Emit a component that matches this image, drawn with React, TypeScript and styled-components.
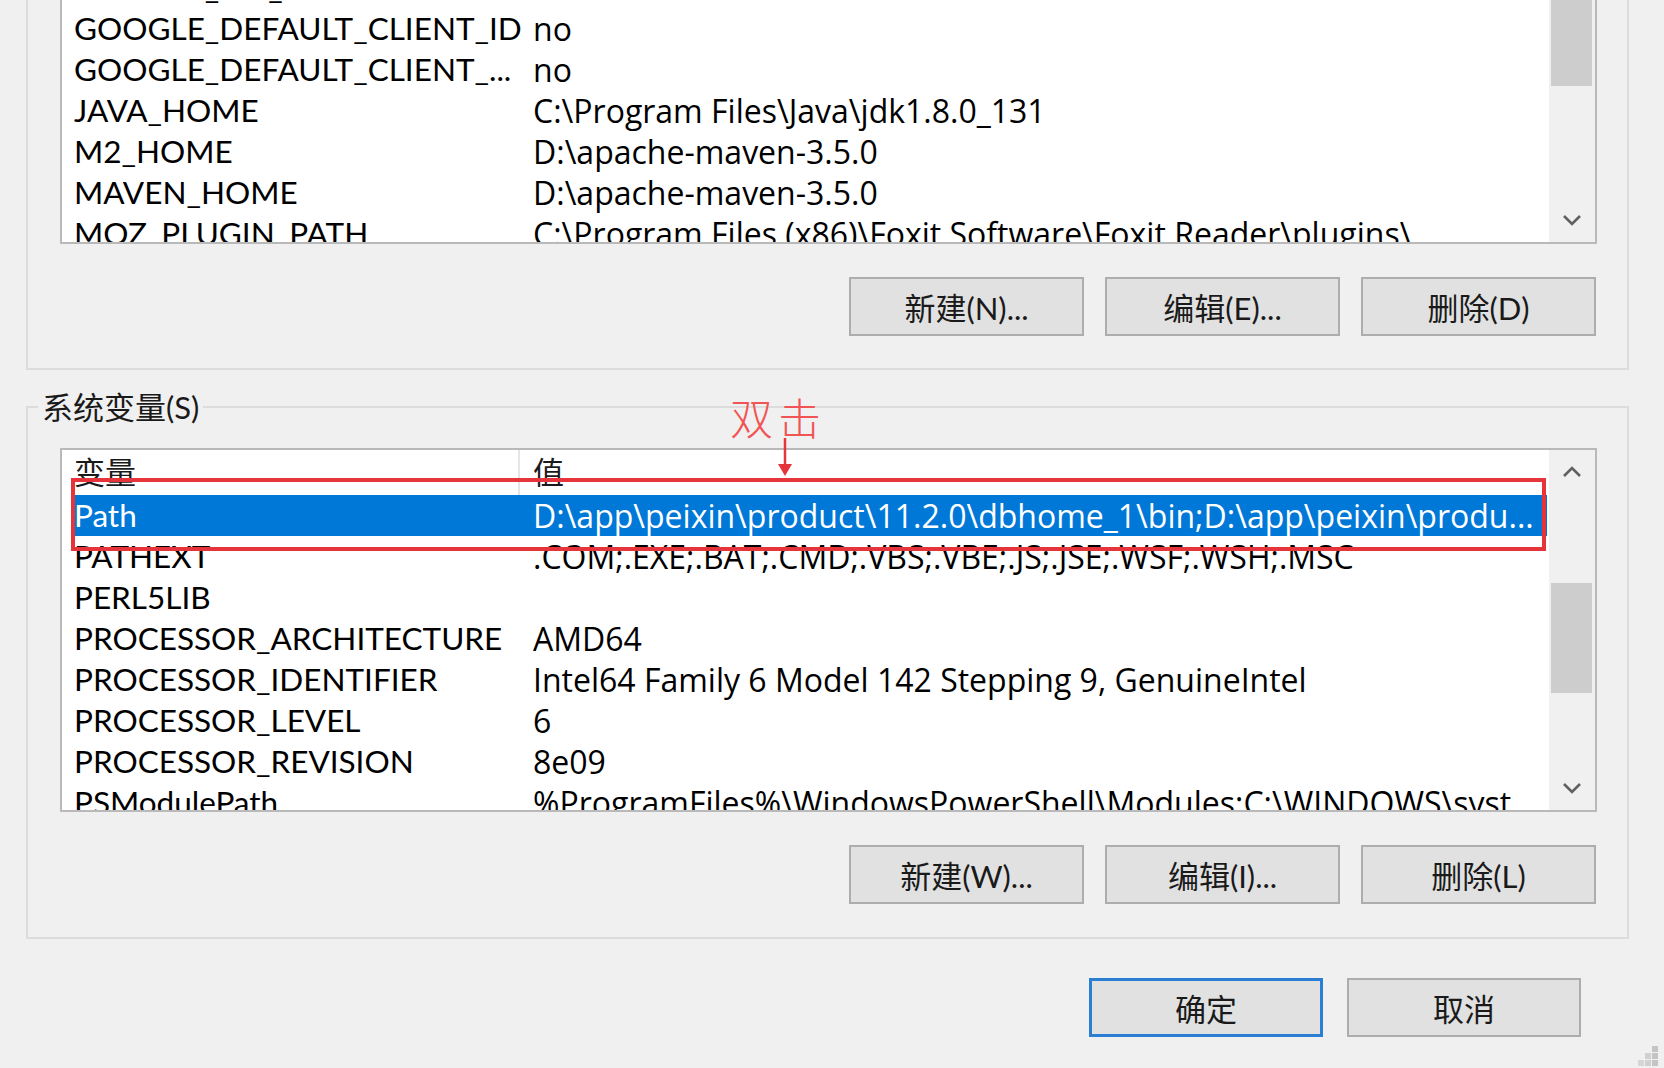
import React from "react";
import styled, { createGlobalStyle } from "styled-components";

const FONT = `Lato, "Noto Sans CJK SC", sans-serif`;
const VALUE_FONT = `"Open Sans", "Noto Sans CJK SC", sans-serif`;

const GlobalStyle = createGlobalStyle`
  html, body {
    margin: 0;
    padding: 0;
    background: #f0f0f0;
    overflow: hidden;
  }
  body {
    font-family: ${FONT};
  }
`;

const Dialog = styled.div`
  position: relative;
  width: 1664px;
  height: 1068px;
  box-sizing: border-box;
  padding: 0 35px 0 26px;
  background: #f0f0f0;
  overflow: hidden;
  display: flex;
  flex-direction: column;
  font-family: ${FONT};
  font-size: 31px;
  color: #000;
`;

const UpperGroup = styled.section`
  margin-top: -82px;
  border: 2px solid #dcdcdc;
  padding: 30px 30px 32px 32px;
  display: flex;
  flex-direction: column;
  gap: 33px;
`;

const LowerGroup = styled.fieldset`
  margin: 19px 0 0 0;
  padding: 0;
  min-width: 0;
  border: 2px solid #dcdcdc;
`;

const Legend = styled.legend`
  margin-left: 10px;
  padding: 0 4px;
  line-height: 36px;
  font-size: 31px;
  color: #1a1a1a;
`;

const GroupBody = styled.div`
  padding: 23px 30px 33px 32px;
  display: flex;
  flex-direction: column;
  gap: 33px;
`;

const ListBox = styled.div<{ $height: number }>`
  height: ${(p) => p.$height}px;
  box-sizing: border-box;
  border: 2px solid #b9b9b9;
  background: #fff;
  display: flex;
  overflow: hidden;
`;

const ListContent = styled.div`
  flex: 1;
  min-width: 0;
  display: flex;
  flex-direction: column;
  overflow: hidden;
`;

const Header = styled.div`
  display: grid;
  grid-template-columns: 458px 1fr;
  height: 45px;
  flex-shrink: 0;
`;

const HeaderCell = styled.div<{ $divider?: boolean }>`
  box-sizing: border-box;
  padding-left: ${(p) => (p.$divider ? 12 : 13)}px;
  line-height: 45px;
  border-right: ${(p) => (p.$divider ? "2px solid #e5e5e5" : "none")};
  color: #1a1a1a;
`;

const Rows = styled.div<{ $offset: number }>`
  padding: ${(p) => p.$offset}px 2px 0 10px;
  display: flex;
  flex-direction: column;
`;

const Row = styled.div<{ $selected?: boolean }>`
  display: grid;
  grid-template-columns: 461px 1fr;
  height: 41px;
  line-height: 41px;
  flex-shrink: 0;
  white-space: nowrap;
  background: ${(p) => (p.$selected ? "#0078d7" : "transparent")};
  color: ${(p) => (p.$selected ? "#fff" : "#000")};
`;

const NameCell = styled.div`
  padding-left: 2px;
  overflow: hidden;
  font-family: ${FONT};
  font-size: 31.5px;
`;

const ValueCell = styled.div`
  overflow: hidden;
  font-family: ${VALUE_FONT};
  font-size: 32px;
`;

const Scrollbar = styled.div`
  width: 46px;
  flex-shrink: 0;
  background: #f0f0f0;
  display: flex;
  flex-direction: column;
`;

const ScrollButton = styled.div`
  height: 44px;
  flex-shrink: 0;
  display: flex;
  align-items: center;
  justify-content: center;
`;

const Track = styled.div`
  flex: 1;
  min-height: 0;
  padding: 0 3px 0 2px;
`;

const Thumb = styled.div<{ $top: number; $size: number }>`
  margin-top: ${(p) => p.$top}px;
  height: ${(p) => p.$size}px;
  background: #cdcdcd;
`;

const ButtonRow = styled.div`
  display: flex;
  justify-content: flex-end;
  gap: 21px;
  padding-right: 1px;
`;

const Button = styled.button<{ $primary?: boolean }>`
  width: 235px;
  height: 59px;
  box-sizing: border-box;
  padding: 0;
  background: #e1e1e1;
  border: ${(p) => (p.$primary ? "3px solid #2a7fd4" : "2px solid #adadad")};
  font-family: ${FONT};
  font-size: 31px;
  color: #1a1a1a;
  display: flex;
  align-items: center;
  justify-content: center;
`;

const Footer = styled.div`
  margin-top: 39px;
  padding-right: 48px;
  display: flex;
  justify-content: flex-end;
  gap: 24px;

  & > button {
    width: 234px;
  }
`;

const Highlight = styled.div`
  position: absolute;
  left: 71px;
  top: 478px;
  width: 1475px;
  height: 73px;
  box-sizing: border-box;
  border: 4px solid #e6353a;
  pointer-events: none;
`;

const Note = styled.div`
  position: absolute;
  left: 730px;
  top: 395px;
  font-family: "Noto Sans CJK SC", sans-serif;
  font-weight: 300;
  font-size: 43px;
  line-height: 43px;
  letter-spacing: 5px;
  color: #f05454;
`;

const NoteArrow = styled.svg`
  position: absolute;
  left: 776px;
  top: 438px;
`;

const Grip = styled.svg`
  position: absolute;
  right: 5px;
  bottom: 2px;
`;

type Item = { name: string; value: string; selected?: boolean };

const userVars: Item[] = [
  { name: "GOOGLE_API_KEY", value: "no" },
  { name: "GOOGLE_DEFAULT_CLIENT_ID", value: "no" },
  { name: "GOOGLE_DEFAULT_CLIENT_...", value: "no" },
  { name: "JAVA_HOME", value: "C:\\Program Files\\Java\\jdk1.8.0_131" },
  { name: "M2_HOME", value: "D:\\apache-maven-3.5.0" },
  { name: "MAVEN_HOME", value: "D:\\apache-maven-3.5.0" },
  {
    name: "MOZ_PLUGIN_PATH",
    value: "C:\\Program Files (x86)\\Foxit Software\\Foxit Reader\\plugins\\",
  },
];

const systemVars: Item[] = [
  {
    name: "Path",
    value: "D:\\app\\peixin\\product\\11.2.0\\dbhome_1\\bin;D:\\app\\peixin\\produ...",
    selected: true,
  },
  { name: "PATHEXT", value: ".COM;.EXE;.BAT;.CMD;.VBS;.VBE;.JS;.JSE;.WSF;.WSH;.MSC" },
  { name: "PERL5LIB", value: "" },
  { name: "PROCESSOR_ARCHITECTURE", value: "AMD64" },
  {
    name: "PROCESSOR_IDENTIFIER",
    value: "Intel64 Family 6 Model 142 Stepping 9, GenuineIntel",
  },
  { name: "PROCESSOR_LEVEL", value: "6" },
  { name: "PROCESSOR_REVISION", value: "8e09" },
  {
    name: "PSModulePath",
    value: "%ProgramFiles%\\WindowsPowerShell\\Modules;C:\\WINDOWS\\syst...",
  },
];

const Chevron = ({ dir }: { dir: "up" | "down" }) => (
  <svg width="20" height="12" viewBox="0 0 20 12">
    <polyline
      points={dir === "up" ? "2,10 10,2 18,10" : "2,2 10,10 18,2"}
      fill="none"
      stroke="#606060"
      strokeWidth="2.6"
    />
  </svg>
);

const VScroll = ({ top, size }: { top: number; size: number }) => (
  <Scrollbar>
    <ScrollButton>
      <Chevron dir="up" />
    </ScrollButton>
    <Track>
      <Thumb $top={top} $size={size} />
    </Track>
    <ScrollButton>
      <Chevron dir="down" />
    </ScrollButton>
  </Scrollbar>
);

const VarRows = ({ items, offset }: { items: Item[]; offset: number }) => (
  <Rows $offset={offset}>
    {items.map((it) => (
      <Row key={it.name} $selected={it.selected}>
        <NameCell>{it.name}</NameCell>
        <ValueCell>{it.value}</ValueCell>
      </Row>
    ))}
  </Rows>
);

export default function App() {
  return (
    <>
      <GlobalStyle />
      <Dialog>
        <UpperGroup>
          <ListBox $height={294}>
            <ListContent>
              <VarRows items={userVars} offset={15} />
            </ListContent>
            <VScroll top={0} size={90} />
          </ListBox>
          <ButtonRow>
            <Button>新建(N)...</Button>
            <Button>编辑(E)...</Button>
            <Button>删除(D)</Button>
          </ButtonRow>
        </UpperGroup>

        <LowerGroup>
          <Legend>系统变量(S)</Legend>
          <GroupBody>
            <ListBox $height={364}>
              <ListContent>
                <Header>
                  <HeaderCell $divider>变量</HeaderCell>
                  <HeaderCell>值</HeaderCell>
                </Header>
                <VarRows items={systemVars} offset={0} />
              </ListContent>
              <VScroll top={89} size={110} />
            </ListBox>
            <ButtonRow>
              <Button>新建(W)...</Button>
              <Button>编辑(I)...</Button>
              <Button>删除(L)</Button>
            </ButtonRow>
          </GroupBody>
        </LowerGroup>

        <Footer>
          <Button $primary>确定</Button>
          <Button>取消</Button>
        </Footer>

        <Highlight />
        <Note>双击</Note>
        <NoteArrow width="18" height="40" viewBox="0 0 18 40">
          <line x1="9" y1="0" x2="9" y2="28" stroke="#e6353a" strokeWidth="2.5" />
          <polygon points="2,26 16,26 9,38" fill="#e6353a" />
        </NoteArrow>
        <Grip width="22" height="20" viewBox="0 0 22 20">
          <rect x="15" y="0" width="6" height="6" fill="#c4c4c4" />
          <rect x="15" y="7" width="6" height="6" fill="#c4c4c4" />
          <rect x="8" y="7" width="6" height="6" fill="#d0d0d0" />
          <rect x="15" y="14" width="6" height="6" fill="#c4c4c4" />
          <rect x="8" y="14" width="6" height="6" fill="#d0d0d0" />
          <rect x="1" y="14" width="6" height="6" fill="#d6d6d6" />
        </Grip>
      </Dialog>
    </>
  );
}
